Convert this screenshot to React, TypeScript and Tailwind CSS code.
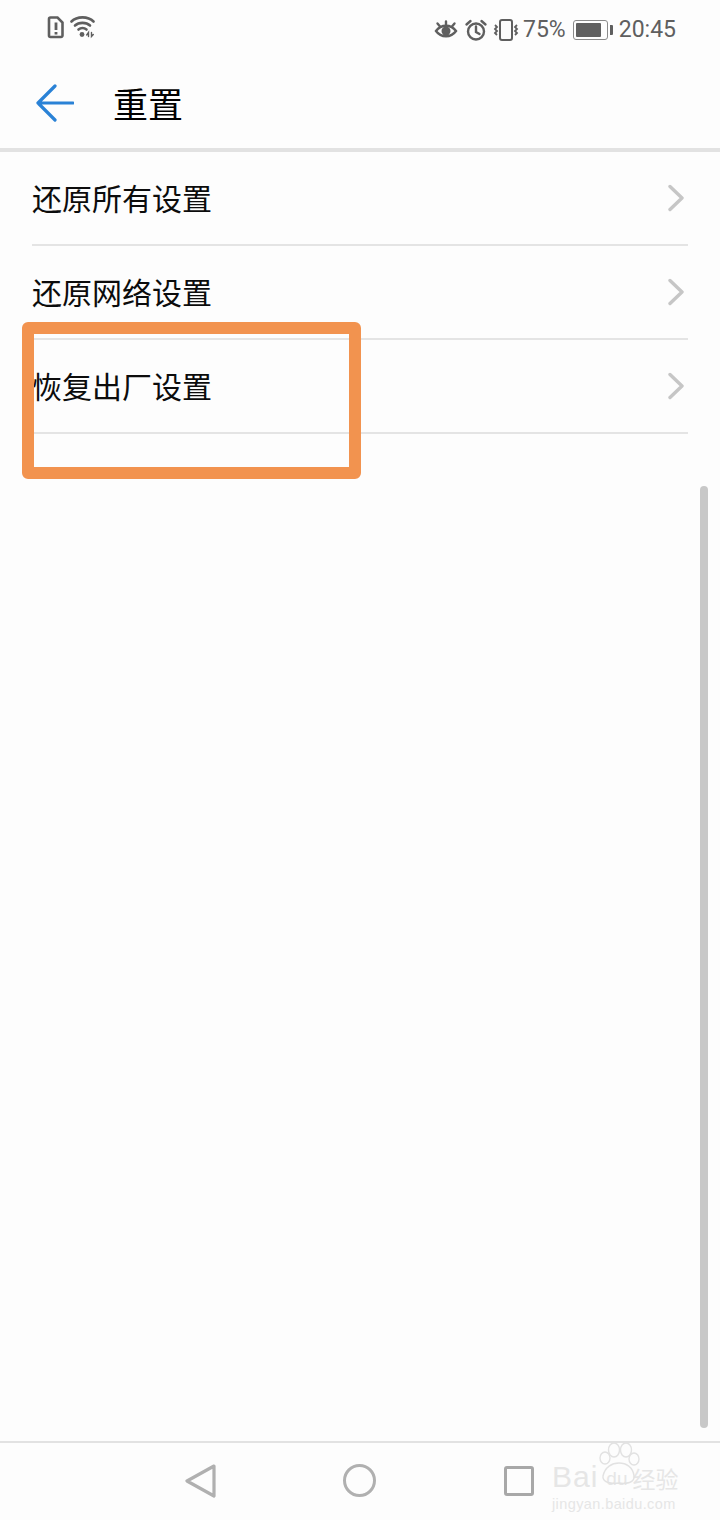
const cjk = { fontFamily: '"Noto Sans CJK SC", sans-serif' };
const rows = ['还原所有设置', '还原网络设置', '恢复出厂设置'];

function StatusBar() {
  return (
    <div className="flex h-[56px] items-start justify-between pl-[47px] pr-[44px] pt-[15px] text-[#5f5f5f]">
      <div className="flex items-center gap-[5px]">
        <svg width="18" height="24" viewBox="0 0 18 24" fill="none">
          <path d="M3.500 2.500h7l5 5v13a1.500 1.500 0 0 1-1.500 1.500H3.500A1.500 1.500 0 0 1 2 20.500v-16.500a1.500 1.500 0 0 1 1.500-1.500z" stroke="#5f5f5f" strokeWidth="2.600" />
          <path d="M9 7.500v7.500M9 17v2.500" stroke="#5f5f5f" strokeWidth="2.800" />
        </svg>
        <svg width="26" height="24" viewBox="0 0 26 24" fill="none" stroke="#5f5f5f" strokeWidth="2.600" strokeLinecap="round">
          <path d="M1.500 6.500C7 1 18 1 23.500 6.500" />
          <path d="M5 10.500c3.800-3.500 11.200-3.500 15 0" />
          <path d="M8.500 14.500c2.300-1.800 5.700-1.800 8 0" />
          <circle cx="12" cy="19.500" r="2.400" fill="#5f5f5f" stroke="none" />
          <path d="M18.500 21.500v-4l-1.800 2.500M21.500 17.500v4l1.800-2" strokeWidth="1.400" />
        </svg>
      </div>
      <div className="flex items-center">
        <svg width="24" height="24" viewBox="0 0 24 24" fill="none" stroke="#5f5f5f" strokeWidth="2.400" className="mr-[6px]" strokeLinecap="round">
          <path d="M2 13c5-7 15-7 20 0-5 7-15 7-20 0z" />
          <circle cx="12" cy="13" r="4.500" fill="#5f5f5f" stroke="none" />
          <path d="M3.500 5.500l2.500 3M12 3.500V7M20.500 5.500L18 8.500" />
        </svg>
        <svg width="24" height="24" viewBox="0 0 24 24" fill="none" stroke="#5f5f5f" strokeWidth="2.400" className="mr-[4px]" strokeLinecap="round">
          <circle cx="12" cy="13.500" r="8" />
          <path d="M12 8.500v5.500l3.500 2M2.500 6.500l4-3.500M21.500 6.500l-4-3.500" />
        </svg>
        <svg width="28" height="24" viewBox="0 0 28 24" fill="none" stroke="#5f5f5f" strokeWidth="2">
          <rect x="8" y="2" width="12" height="20" rx="2" />
          <path d="M3 7l2 2-2 2 2 2-2 2 2 2M25 7l-2 2 2 2-2 2 2 2-2 2" strokeWidth="1.800" />
        </svg>
        <span className="ml-[3px] text-[23px] leading-[30px]" style={{ fontFamily: 'Roboto, sans-serif' }}>75%</span>
        <div className="ml-[7px] flex items-center">
          <div className="flex h-[20px] w-[35px] items-center rounded-[3px] border border-[#8a8a8a] p-[2px]">
            <div className="h-full w-[25px] rounded-[1px] bg-[#5f5f5f]" />
          </div>
          <div className="ml-[2px] h-[10px] w-[3px] rounded-r-[1px] bg-[#5f5f5f]" />
        </div>
        <span className="ml-[6px] text-[23px] leading-[30px]" style={{ fontFamily: 'Roboto, sans-serif' }}>20:45</span>
      </div>
    </div>
  );
}

function Watermark() {
  return (
    <div className="absolute left-[552px] top-[1440px] text-[#e6e6e6]">
      <svg width="44" height="46" viewBox="0 0 44 46" fill="none" stroke="#e2e2e2" strokeWidth="1.400" className="absolute left-[44px] top-[1px]">
        <ellipse cx="9" cy="17" rx="5" ry="6" />
        <ellipse cx="18" cy="9" rx="5.500" ry="7" />
        <ellipse cx="30" cy="9" rx="5.500" ry="7" />
        <ellipse cx="38" cy="18" rx="5" ry="6" />
        <path d="M7 35c2-9 9-13 16-13s14 4 15 13c1 7-8 8-15 7-7 1-17 0-16-7z" />
      </svg>
      <div className="mt-[20px] flex items-end">
        <span className="text-[30px] leading-[34px] tracking-[1px]" style={{ fontFamily: 'Liberation Sans, sans-serif' }}>Bai</span>
        <span className="ml-[8px] text-[19px] leading-[30px]" style={{ fontFamily: 'Liberation Sans, sans-serif' }}>du</span>
        <span className="ml-[5px] text-[23px] leading-[32px]" style={cjk}>经验</span>
      </div>
      <div className="mt-[2px] text-[14.500px] leading-[16px] tracking-[0.400px]" style={{ fontFamily: 'Liberation Sans, sans-serif' }}>jingyan.baidu.com</div>
    </div>
  );
}

export default function App() {
  return (
    <div className="relative flex h-[1520px] w-[720px] flex-col overflow-hidden bg-[#fdfdfd]">
      <StatusBar />
      <header className="flex h-[96px] items-center border-b-4 border-[#e2e2e2] pl-[36px]">
        <svg width="38" height="38" viewBox="0 0 38 38" fill="none" stroke="#2a82d6" strokeWidth="3.200" strokeLinecap="round" strokeLinejoin="round" className="mt-[1px]">
          <path d="M19 2L2 19l17 17M2 19h35" />
        </svg>
        <h1 className="ml-[39px] mt-[2px] text-[35px] leading-[44px] text-black" style={cjk}>重置</h1>
      </header>
      <main className="flex-1 px-[32px]">
        {rows.map((label) => (
          <div key={label} className="flex h-[94px] items-center justify-between border-b-2 border-[#e4e4e4]">
            <span className="pb-[3px] text-[30px] leading-[40px] text-[#0c0c0c]" style={cjk}>{label}</span>
            <svg width="16" height="28" viewBox="0 0 16 28" fill="none" stroke="#c6c6c6" strokeWidth="3.400" strokeLinecap="round" strokeLinejoin="round" className="mr-[4px]">
              <path d="M2 2.500l12 11.500-12 11.500" />
            </svg>
          </div>
        ))}
      </main>
      <nav className="flex h-[79px] items-center border-t-2 border-[#e2e2e2] pb-[2px]">
        <svg width="32" height="34" viewBox="0 0 32 34" fill="none" stroke="#b0b0b0" strokeWidth="3.200" strokeLinejoin="round" className="ml-[185px]">
          <path d="M29 2L2 17l27 15z" />
        </svg>
        <div className="ml-[126px] h-[33px] w-[33px] rounded-full border-[3px] border-[#b0b0b0]" />
        <div className="ml-[128px] h-[30px] w-[30px] rounded-[3px] border-[3px] border-[#a8a8a8]" />
      </nav>
      <div className="absolute left-[700px] top-[486px] h-[942px] w-[8px] rounded-full bg-[#c8c8c8]" />
      <div className="absolute left-[22px] top-[322px] h-[157px] w-[339px] rounded-[6px] border-[12px] border-[#f2934f]" />
      <Watermark />
    </div>
  );
}
